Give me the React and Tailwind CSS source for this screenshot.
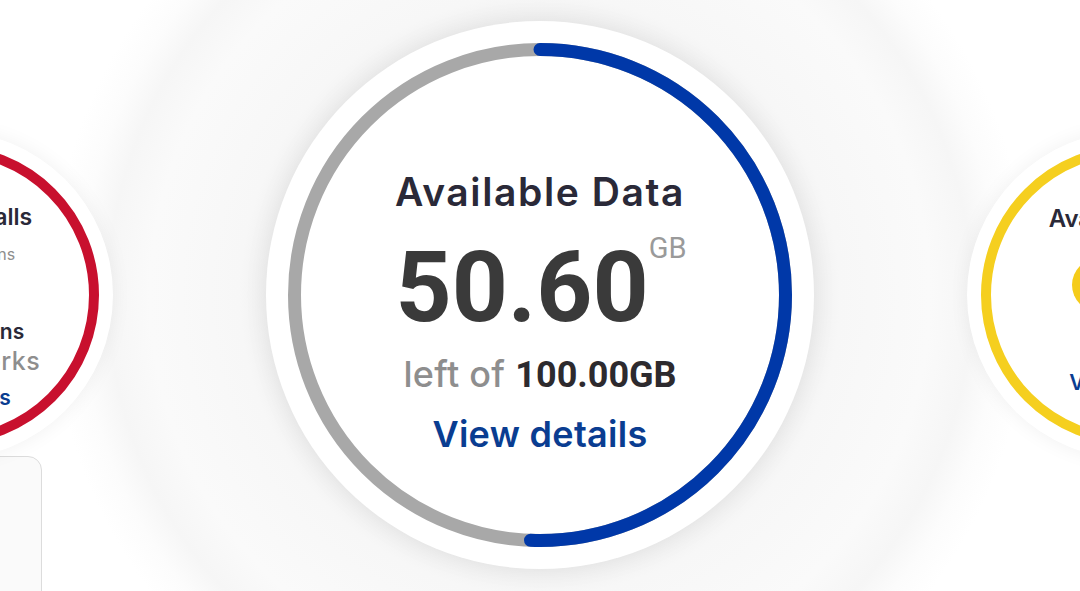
import React from 'react';

const sans = "font-['Inter','Noto_Sans',sans-serif]";
const num = "font-['Roboto','Liberation_Sans',sans-serif]";

const Ring = ({ size, stroke, color, track, percent }) => {
  const r = (size - stroke) / 2;
  const c = 2 * Math.PI * r;
  return (
    <svg width={size} height={size} viewBox={`0 0 ${size} ${size}`} className="absolute inset-0 m-auto">
      <circle cx={size / 2} cy={size / 2} r={r} fill="none" stroke={track} strokeWidth={stroke} />
      {percent > 0 && (
        <circle
          cx={size / 2} cy={size / 2} r={r} fill="none" stroke={color} strokeWidth={stroke}
          strokeLinecap="round" strokeDasharray={`${c * percent} ${c}`}
          transform={`rotate(-90 ${size / 2} ${size / 2})`}
        />
      )}
    </svg>
  );
};

const SideCalls = () => (
  <div className="relative mt-[131px] w-[328px] h-[328px] shrink-0 rounded-full bg-white shadow-[0_0_20px_rgba(0,0,0,0.06)]">
    <Ring size={300} stroke={10} color="#c8102e" track="#c8102e" percent={0} />
    <div className={`relative h-full flex flex-col items-center ${sans}`}>
      <div className="mt-[71px] text-[23px] leading-[30px] font-semibold text-[#2a2938]">Unlimited Calls</div>
      <div className="mt-[11px] text-[16px] leading-[22px] text-[#8e8e8e]">Local & STD mins</div>
      <div className="mt-[54px] text-[21px] leading-[26px] font-semibold text-[#2a2938]">Unlimited mins</div>
      <div className="mt-[2px] text-[25px] leading-[28px] font-medium tracking-[0.5px] text-[#8e8e8e]">to all networks</div>
      <div className="mt-[10px] text-[21px] leading-[26px] font-semibold text-[#0a3d91]">View details</div>
    </div>
  </div>
);

const SideSms = () => (
  <div className="relative mt-[131px] w-[328px] h-[328px] shrink-0 rounded-full bg-white shadow-[0_0_20px_rgba(0,0,0,0.06)]">
    <Ring size={300} stroke={10} color="#f5cf1f" track="#f5cf1f" percent={0} />
    <div className={`relative h-full flex flex-col items-center ${sans}`}>
      <div className="mt-[73px] text-[24px] leading-[30px] font-semibold text-[#2a2938]">Available SMS</div>
      <div className="mt-[24px] w-[118px] h-[54px] rounded-full bg-[#f5cc1a]" />
      <div className="mt-[58px] text-[21px] leading-[26px] font-semibold text-[#0a3d91]">View details</div>
    </div>
  </div>
);

const MainData = () => (
  <div className="relative mt-[21px] w-[548px] h-[548px] shrink-0 rounded-full bg-white shadow-[0_0_24px_rgba(0,0,0,0.07)]">
    <Ring size={504} stroke={13} color="#0038a8" track="#a8a8a8" percent={0.506} />
    <div className="relative h-full flex flex-col items-center">
      <div className={`mt-[148px] text-[39px] leading-[46px] font-semibold text-[#2a2938] tracking-[1.6px] ${sans}`}>
        Available Data
      </div>
      <div className="mt-[27px] ml-[2px] flex items-start">
        <span className={`text-[98px] leading-[92px] font-bold text-[#3a3a3a] ${num}`}>50.60</span>
        <span className={`mt-[-10px] text-[29px] leading-[32px] text-[#9a9a9a] ${num}`}>GB</span>
      </div>
      <div className="mt-[20px] flex items-baseline gap-[10px] text-[36px] leading-[40px]">
        <span className={`font-medium tracking-[0.3px] text-[#8e8e8e] ${sans}`}>left of</span>
        <span className={`font-bold text-[#2d2a2e] ${num}`}>100.00GB</span>
      </div>
      <div className={`mt-[18px] text-[36px] leading-[42px] font-semibold tracking-[0.3px] text-[#0a3d91] ${sans}`}>View details</div>
    </div>
  </div>
);

export default function App() {
  return (
    <div className="w-[1080px] h-[591px] overflow-hidden bg-[radial-gradient(circle_at_540px_295px,#f0f0f0_272px,#f7f7f7_300px,#fafafa_390px,#f6f6f6_432px,#fcfcfc_460px,#ffffff_490px)]">
      <div className="h-[456px] flex justify-center items-start gap-[153px]">
        <SideCalls />
        <MainData />
        <SideSms />
      </div>
      <div className="flex">
        <div className="-ml-[158px] w-[200px] h-[160px] rounded-[14px] border border-[#dcdcdc] bg-[#fafafa]" />
      </div>
    </div>
  );
}
